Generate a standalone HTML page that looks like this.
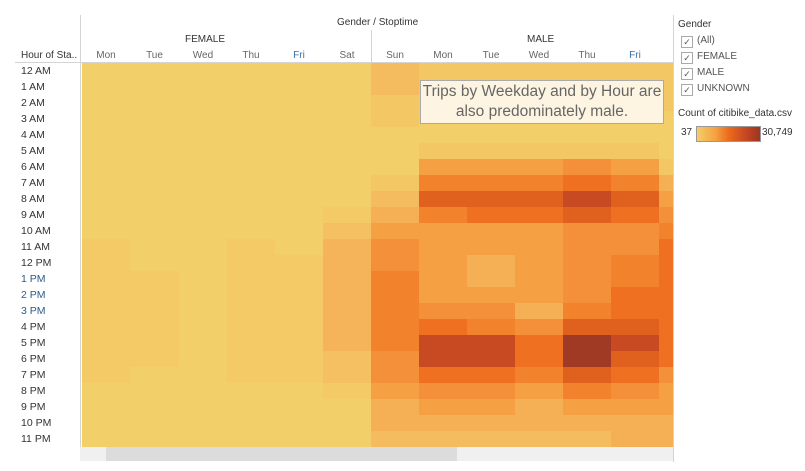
<!DOCTYPE html>
<html><head><meta charset="utf-8"><style>
body{margin:0;width:805px;height:471px;background:#fff;font-family:"Liberation Sans",sans-serif;position:relative;overflow:hidden}
.t{position:absolute;font-size:10px;color:#333;white-space:nowrap}
.c{position:absolute;height:16px}
.l{position:absolute;background:#d4d4d4}
.cb{position:absolute;left:681px;width:10px;height:10px;border:1px solid #aaa;background:#fff;font-size:9px;line-height:10px;text-align:center;color:#555}
</style></head><body>
<div id="g"></div>
<div class="l" style="left:80px;top:15px;width:1px;height:432px"></div>
<div class="l" style="left:371px;top:30px;width:1px;height:33px"></div>
<div class="l" style="left:15px;top:62px;width:658px;height:1px"></div>
<div class="l" style="left:673px;top:15px;width:1px;height:447px"></div>
<div class="t" style="left:337px;top:17px">Gender / Stoptime</div>
<div class="t" style="left:185px;top:34px">FEMALE</div>
<div class="t" style="left:527px;top:34px">MALE</div>
<div class="t" style="left:21px;top:50px">Hour of Sta..</div>
<div style="position:absolute;left:80px;top:447px;width:593px;height:14px;background:#f0f0f0"></div>
<div style="position:absolute;left:106px;top:447px;width:351px;height:14px;background:#dcdcdc"></div>
<div style="position:absolute;left:420px;top:80px;width:242px;height:41px;background:#fdf5e2;border:1px solid #aaa;color:#666;font-size:15.5px;text-align:center;line-height:20px;padding-top:1px">Trips by Weekday and by Hour are<br>also predominately male.</div>
<div class="t" style="left:678px;top:19px">Gender</div>
<div class="cb" style="top:36px">✓</div><div class="t" style="left:697px;top:35px;color:#555">(All)</div>
<div class="cb" style="top:52px">✓</div><div class="t" style="left:697px;top:51px;color:#555">FEMALE</div>
<div class="cb" style="top:68px">✓</div><div class="t" style="left:697px;top:67px;color:#555">MALE</div>
<div class="cb" style="top:84px">✓</div><div class="t" style="left:697px;top:83px;color:#555">UNKNOWN</div>
<div class="t" style="left:678px;top:108px">Count of citibike_data.csv</div>
<div class="t" style="left:681px;top:127px">37</div>
<div style="position:absolute;left:696px;top:126px;width:63px;height:14px;border:1px solid #999;background:linear-gradient(90deg,#f5cd6a,#f4a040 30%,#ec6b1c 50%,#c84a22 75%,#9e3422)"></div>
<div class="t" style="left:762px;top:127px">30,749</div>
<script>
var pal=['#f2cf68','#f3c764','#f4bc5e','#f5b056','#f6a044','#f4903a','#f2822c','#ee7020','#e0601e','#c84a22','#a03a24'];
var fp=['#f2cf68','#f3ca66','#f4c062','#f5b45a'];
var hrs=['12 AM','1 AM','2 AM','3 AM','4 AM','5 AM','6 AM','7 AM','8 AM','9 AM','10 AM','11 AM','12 PM','1 PM','2 PM','3 PM','4 PM','5 PM','6 PM','7 PM','8 PM','9 PM','10 PM','11 PM'];
var cols=[82,130,179,227,275,323,371,419,467,515,563,611,659,673];
var days=['Mon','Tue','Wed','Thu','Fri','Sat','Sun','Mon','Tue','Wed','Thu','Fri'];
var M=[
[2,1,1,1,1,1,1],[2,1,1,1,1,1,1],[1,0,0,0,0,0,1],[1,0,0,0,0,0,0],[0,0,0,0,0,0,0],[0,1,1,1,1,1,0],
[0,4,4,4,5,4,1],[1,6,6,6,7,6,3],[2,8,8,8,9,8,4],[3,6,7,7,8,7,5],[4,4,4,4,5,5,6],[5,4,4,4,5,5,7],
[5,4,3,4,5,6,7],[6,4,3,4,5,6,7],[6,4,4,4,5,7,7],[6,5,5,3,6,7,7],[6,7,6,5,8,8,7],[6,9,9,7,10,9,7],
[5,9,9,7,10,8,7],[5,7,7,6,8,7,5],[4,5,5,4,6,5,4],[3,4,4,3,4,4,4],[3,3,3,3,3,3,3],[2,2,2,2,2,3,3]];
var F=[];for(var r=0;r<24;r++){var s=0;if(r==9)s=1;if(r>=10&&r<=11)s=2;if(r>=11&&r<=17)s=3;if(r>=18&&r<=19)s=2;if(r==20)s=1;
var m=(r>=11&&r<=19)?1:0;F.push([m,(r>=13&&r<=18)?1:0,0,m,(r>=12&&r<=19)?1:0,s]);}
var h='';
for(var r=0;r<24;r++){var y=63+r*16;
var blue=(r>=13&&r<=15);
h+='<div class="t" style="left:21px;top:'+(y+2)+'px;font-size:10.5px;color:'+(blue?'#2b5c8a':'#333')+'">'+hrs[r]+'</div>';
for(var c=0;c<13;c++){var col=c<6?fp[F[r][c]]:pal[M[r][c-6]];
h+='<div class="c" style="left:'+cols[c]+'px;top:'+y+'px;width:'+(cols[c+1]-cols[c])+'px;background:'+col+'"></div>';}}
for(var c=0;c<12;c++){h+='<div class="t" style="left:'+cols[c]+'px;width:'+(cols[c+1]-cols[c])+'px;text-align:center;top:50px;color:'+(days[c]=='Fri'?'#3d6ea8':'#666')+'">'+days[c]+'</div>';}
document.getElementById('g').innerHTML=h;
</script>
</body></html>
